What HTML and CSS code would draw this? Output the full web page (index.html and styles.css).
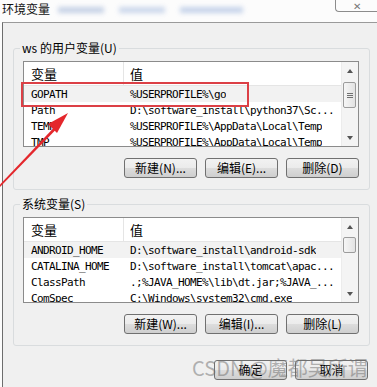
FILE: index.html
```html
<!DOCTYPE html>
<html>
<head>
    <title>环境变量</title>
    <link rel="stylesheet" href="styles.css">
</head>
<body>
    <!-- title bar of the dialog -->
    <div class="titlebar">
        <span class="title">环境变量</span>
        <span class="title-blur"></span>
        <span class="close-btn">✕</span>
    </div>

    <div class="dialog">
        <!-- user variables -->
        <fieldset class="group">
            <legend>ws 的用户变量(U)</legend>
            <div class="listbox">
                <div class="list-rows">
                    <div class="row header"><span class="col-name">变量</span><span class="col-value">值</span></div>
                    <div class="row current"><span class="col-name">GOPATH</span><span class="col-value">%USERPROFILE%\go</span></div>
                    <div class="row"><span class="col-name">Path</span><span class="col-value">D:\software_install\python37\Sc...</span></div>
                    <div class="row"><span class="col-name">TEMP</span><span class="col-value">%USERPROFILE%\AppData\Local\Temp</span></div>
                    <div class="row"><span class="col-name">TMP</span><span class="col-value">%USERPROFILE%\AppData\Local\Temp</span></div>
                </div>
                <div class="scrollbar">
                    <div class="scroll-arrow up"></div>
                    <div class="scroll-track"><div class="thumb thumb-user"><span class="grip"></span></div></div>
                    <div class="scroll-arrow down"></div>
                </div>
            </div>
            <div class="button-row">
                <button>新建(N)...</button>
                <button>编辑(E)...</button>
                <button>删除(D)</button>
            </div>
        </fieldset>

        <!-- system variables -->
        <fieldset class="group">
            <legend>系统变量(S)</legend>
            <div class="listbox">
                <div class="list-rows">
                    <div class="row header"><span class="col-name">变量</span><span class="col-value">值</span></div>
                    <div class="row current"><span class="col-name">ANDROID_HOME</span><span class="col-value">D:\software_install\android-sdk</span></div>
                    <div class="row"><span class="col-name">CATALINA_HOME</span><span class="col-value">D:\software_install\tomcat\apac...</span></div>
                    <div class="row"><span class="col-name">ClassPath</span><span class="col-value">.;%JAVA_HOME%\lib\dt.jar;%JAVA_...</span></div>
                    <div class="row"><span class="col-name">ComSpec</span><span class="col-value">C:\Windows\system32\cmd.exe</span></div>
                </div>
                <div class="scrollbar">
                    <div class="scroll-arrow up"></div>
                    <div class="scroll-track"><div class="thumb thumb-system"></div></div>
                    <div class="scroll-arrow down"></div>
                </div>
            </div>
            <div class="button-row">
                <button>新建(W)...</button>
                <button>编辑(I)...</button>
                <button>删除(L)</button>
            </div>
        </fieldset>

        <div class="dialog-buttons">
            <button>确定</button>
            <button>取消</button>
        </div>
    </div>

    <!-- annotations drawn over the screenshot -->
    <div class="highlight-box"></div>
    <svg class="arrow" width="80" height="200" viewBox="0 0 80 200">
        <polygon points="0,187 0,184.5 54,127.5 55.5,130" fill="#e4272c"/>
        <polygon points="68,113 48,124 52,128 57,133" fill="#e4272c"/>
    </svg>
    <div class="watermark">CSDN @魔都吴所谓</div>
</body>
</html>
```

FILE: styles.css
```css
body {
    margin: 0;
    background-color: #fcfcfc;
    font-family: "Noto Sans CJK SC", sans-serif;
    font-size: 12px;
    color: #000;
    overflow: hidden;
}

/* title bar */
.titlebar {
    display: flex;
    align-items: flex-start;
    height: 22px;
}

.title {
    margin: 1px 0 0 2px;
    line-height: 15px;
    font-size: 12px;
    color: #111;
}

.title-blur {
    width: 185px;
    height: 6px;
    margin: 7px 0 0 8px;
    background: linear-gradient(90deg, #9fb3d6 0 25%, transparent 25% 33%, #a9bde0 33% 58%, transparent 58% 66%, #9fb6dd 66%);
    opacity: 0.6;
    filter: blur(2.5px);
}

.close-btn {
    margin-left: auto;
    width: 42px;
    height: 12px;
    box-sizing: border-box;
    border: 1px solid #8c8c8c;
    border-top: none;
    border-right: none;
    border-radius: 0 0 0 4px;
    text-align: center;
    line-height: 11px;
    font-size: 10px;
    color: #777;
}

/* dialog body */
.dialog {
    margin-left: 2px;
    height: 365px;
    box-sizing: border-box;
    border-top: 1px solid #9a9a9a;
    border-left: 1px solid #6d6d6d;
    background-color: #f0f0f0;
}

.group {
    margin: 18px 7px 0 10px;
    padding: 6px 10px 11px 9px;
    min-width: 0;
    border: 1px solid #d9dcde;
    border-radius: 3px;
}

.group + .group {
    margin-top: 7px;
}

legend {
    margin-left: -3px;
    padding: 0 2px;
    line-height: 14px;
    font-size: 12px;
}

/* list view */
.listbox {
    display: flex;
    height: 86px;
    box-sizing: border-box;
    border: 1px solid #8b8b8b;
    background-color: #fff;
    overflow: hidden;
}

.list-rows {
    flex: 1;
    min-width: 0;
    overflow: hidden;
}

.row {
    display: flex;
    height: 16px;
    line-height: 17px;
    font-family: "DejaVu Sans Mono", monospace;
    font-size: 11px;
    letter-spacing: -0.62px;
    white-space: nowrap;
}

.row.header {
    height: 24px;
    line-height: 24px;
    box-sizing: border-box;
    border-bottom: 1px solid #e5e5e5;
    font-family: "Noto Sans CJK SC", sans-serif;
    font-size: 13px;
    letter-spacing: 0;
}

.row.current {
    background-color: #f2f2f2;
}

.col-name {
    flex: none;
    width: 100px;
    padding-left: 7px;
    box-sizing: border-box;
}

.header .col-name {
    border-right: 1px solid #e5e5e5;
}

.col-value {
    padding-left: 6px;
    overflow: hidden;
}

/* scrollbar */
.scrollbar {
    display: flex;
    flex-direction: column;
    width: 17px;
    background-color: #f4f4f4;
    border-left: 1px solid #ececec;
    box-sizing: border-box;
}

.scroll-arrow {
    display: flex;
    justify-content: center;
    align-items: center;
    height: 17px;
}

.scroll-arrow::before {
    content: "";
    border-left: 3.5px solid transparent;
    border-right: 3.5px solid transparent;
}

.scroll-arrow.up::before {
    border-bottom: 4px solid #555;
}

.scroll-arrow.down::before {
    border-top: 4px solid #555;
}

.scroll-track {
    flex: 1;
}

.thumb {
    display: flex;
    justify-content: center;
    align-items: center;
    width: 13px;
    margin-left: 1px;
    box-sizing: border-box;
    border: 1px solid #9c9c9c;
    border-radius: 2px;
    background: linear-gradient(90deg, #f6f6f6, #e3e3e3);
}

.thumb-user {
    height: 26px;
    margin-top: 3px;
}

.thumb-system {
    height: 16px;
    margin-top: 2px;
}

.grip {
    width: 6px;
    height: 5px;
    background: repeating-linear-gradient(#707070 0 1px, transparent 1px 2px);
}

/* buttons */
.button-row {
    display: flex;
    justify-content: flex-end;
    gap: 8px;
    margin-top: 11px;
}

button {
    width: 73px;
    height: 20px;
    padding: 0;
    border: 1px solid #707070;
    border-radius: 3px;
    background: linear-gradient(#f2f2f2, #ebebeb 50%, #dddddd 50%, #cfcfcf);
    font-family: "Noto Sans CJK SC", sans-serif;
    font-size: 12px;
    line-height: 16px;
    color: #000;
}

.dialog-buttons {
    display: flex;
    justify-content: flex-end;
    gap: 8px;
    margin: 14px 9px 0 0;
}

/* annotations */
.highlight-box {
    position: absolute;
    left: 21px;
    top: 82px;
    width: 228px;
    height: 25px;
    box-sizing: border-box;
    border: 2px solid #dc4046;
}

.arrow {
    position: absolute;
    left: 0;
    top: 0;
}

.watermark {
    position: absolute;
    left: 192px;
    top: 356px;
    font-family: "Noto Sans CJK SC", sans-serif;
    font-size: 20px;
    line-height: 24px;
    color: rgba(110, 110, 110, 0.5);
    white-space: nowrap;
}
```
